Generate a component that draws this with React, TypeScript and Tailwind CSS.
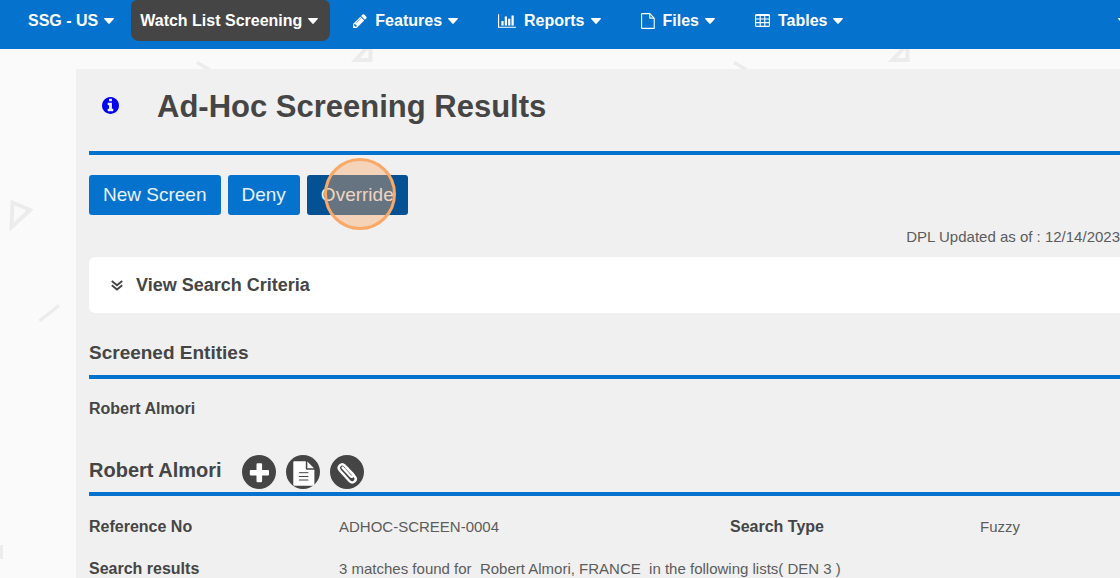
import type { ReactNode } from "react";

const bold = "font-['Liberation_Sans',Arial,sans-serif] font-bold";
const regular = "font-['Liberation_Sans',Arial,sans-serif] font-normal";

function Caret() {
  return (
    <svg viewBox="0 0 10 6" className="h-[6px] w-[10px] shrink-0" fill="currentColor" aria-hidden="true">
      <path d="M.7 0h8.6c.6 0 .9.7.5 1.1L5.7 5.6c-.4.5-1 .5-1.4 0L.2 1.1C-.2.7.1 0 .7 0Z" />
    </svg>
  );
}

function PencilIcon() {
  return (
    <svg viewBox="160 128 1500 1536" className="h-[14px] w-[14px]" fill="currentColor" aria-hidden="true">
      <path d="M491 1536l91-91-235-235-91 91v107h128v128h107zm523-928q0-22-22-22-10 0-17 7l-542 542q-7 7-7 17 0 22 22 22 10 0 17-7l542-542q7-7 7-17zm-54-192l416 416-832 832h-416v-416zm683 96q0 53-37 90l-166 166-416-416 166-165q36-38 90-38 53 0 91 38l235 234q37 39 37 91z" />
    </svg>
  );
}

function ChartIcon() {
  return (
    <svg viewBox="0 128 2048 1536" className="h-[14px] w-[18px]" fill="currentColor" aria-hidden="true">
      <path d="M640 896v512h-256v-512h256zm384-512v1024h-256v-1024h256zm1024 1152v128h-2048v-1536h128v1408h1920zm-640-896v768h-256v-768h256zm384-384v1152h-256v-1152h256z" />
    </svg>
  );
}

function FileIcon() {
  return (
    <svg viewBox="0 0 14 16" className="h-[16px] w-[14px]" fill="none" stroke="currentColor" strokeWidth="1.1" strokeLinejoin="round" aria-hidden="true">
      <path d="M1 .6h7.8l4.4 4.5v10.3H1a.4.4 0 0 1-.4-.4V1A.4.4 0 0 1 1 .6Z" />
      <path d="M8.8.8v4.3h4.2" />
    </svg>
  );
}

function TableIcon() {
  return (
    <svg viewBox="0 0 15 13" className="h-[13px] w-[15px]" fill="none" stroke="currentColor" strokeWidth="1.1" aria-hidden="true">
      <rect x=".6" y=".6" width="13.8" height="11.8" rx="1" />
      <path d="M.6 1.2h13.8" strokeWidth="1.6" />
      <path d="M.6 5h13.8M.6 8.6h13.8M5.2 1v11.4M9.8 1v11.4" />
    </svg>
  );
}

function InfoIcon() {
  return (
    <svg viewBox="128 128 1536 1536" className="h-[17px] w-[17px]" fill="currentColor" aria-hidden="true">
      <path d="M1152 1376v-160q0-14-9-23t-23-9h-96v-512q0-14-9-23t-23-9h-320q-14 0-23 9t-9 23v160q0 14 9 23t23 9h96v320h-96q-14 0-23 9t-9 23v160q0 14 9 23t23 9h448q14 0 23-9t9-23zm-128-896v-160q0-14-9-23t-23-9h-192q-14 0-23 9t-9 23v160q0 14 9 23t23 9h192q14 0 23-9t9-23zm640 416q0 209-103 385.5t-279.5 279.5-385.5 103-385.5-103-279.5-279.5-103-385.5 103-385.5 279.5-279.5 385.5-103 385.5 103 279.5 279.5 103 385.5z" />
    </svg>
  );
}

function DoubleDown() {
  return (
    <svg viewBox="0 0 12 11" className="h-[11px] w-[12px]" fill="none" stroke="currentColor" strokeWidth="1.9" aria-hidden="true">
      <path d="m.8.9 5.2 4.3L11.2.9M.8 5.3 6 9.6l5.2-4.3" />
    </svg>
  );
}

function PlusGlyph() {
  return (
    <svg viewBox="0 0 34 34" className="size-full" aria-hidden="true">
      <path d="M15.500 8.200h3.600a1 1 0 0 1 1 1v5.800h5.900a1 1 0 0 1 1 1v3.400a1 1 0 0 1-1 1h-5.900v5.800a1 1 0 0 1-1 1h-3.600a1 1 0 0 1-1-1v-5.800H8.800a1 1 0 0 1-1-1V16a1 1 0 0 1 1-1h5.700V9.200a1 1 0 0 1 1-1Z" fill="#fff" />
    </svg>
  );
}

function DocumentGlyph() {
  return (
    <svg viewBox="0 0 34 34" className="size-full" aria-hidden="true">
      <path d="M8.300 6.200h11.500v7.600a1 1 0 0 0 1 1H28.400v15a1 1 0 0 1-1 1H8.300a1 1 0 0 1-1-1V7.200a1 1 0 0 1 1-1Z" fill="#fff" />
      <path d="M21.300 6.600 28 13.300h-6.700Z" fill="#fff" />
      <path d="M12.900 17.700h9.500M12.900 21.500h9.500M12.900 25h9.500" stroke="#454545" strokeWidth="1" />
    </svg>
  );
}

function PaperclipGlyph() {
  return (
    <svg viewBox="0 0 34 34" className="size-full" fill="none" stroke="#fff" strokeWidth="2.400" strokeLinecap="round" aria-hidden="true">
      <path d="M18.200 14.200 14.600 10.400C11.500 7.300 6.600 12 9.800 15.400L19.400 26C23 29.800 28 25 24.600 21.300L16.300 12.300" />
      <path d="M12.600 12.600 20.300 21C22 22.800 24.400 20.600 22.800 18.800L16.300 12.300" />
    </svg>
  );
}

function NavItem({ icon, label, className }: { icon: ReactNode; label: string; className: string }) {
  return (
    <button type="button" className={`flex h-[41px] items-center gap-[6px] ${className}`}>
      {icon}
      <span className="ml-[2px]">{label}</span>
      <Caret />
    </button>
  );
}

function BackgroundShapes() {
  return (
    <svg className="absolute inset-0 size-full" fill="none" stroke="#ececec" strokeWidth="3.500" aria-hidden="true">
      <path d="M12.500 202.500 30 210 11.500 227Z" strokeWidth="4" />
      <path d="M39.500 321 59 305.500M197 62.500 210 70M734 62.500 747 70" />
      <path d="M355.500 60h15V44ZM892.500 60h15V44Z" strokeWidth="4" />
      <path d="M0 552h3" strokeWidth="14" />
    </svg>
  );
}

function ToolButton({ label, children }: { label: string; children: ReactNode }) {
  return (
    <button type="button" aria-label={label} className="size-[34px] rounded-full bg-[#454545]">
      {children}
    </button>
  );
}

export default function App() {
  return (
    <div className="relative flex h-screen flex-col overflow-hidden bg-[#fafafa] text-[#454545]">
      <BackgroundShapes />
      <nav className={`relative flex h-[49px] shrink-0 items-start bg-[#0572ce] pl-7 text-base text-white ${bold}`}>
        <button type="button" className="flex h-[41px] items-center gap-[6px]">
          <span>SSG - US</span>
          <Caret />
        </button>
        <button type="button" className="ml-[17px] flex h-[41px] items-center gap-[6px] rounded-b-lg rounded-t-md bg-[#454545] pl-[9px] pr-3">
          <span>Watch List Screening</span>
          <Caret />
        </button>
        <NavItem icon={<PencilIcon />} label="Features" className="ml-[23px]" />
        <NavItem icon={<ChartIcon />} label="Reports" className="ml-10" />
        <NavItem icon={<FileIcon />} label="Files" className="ml-10" />
        <NavItem icon={<TableIcon />} label="Tables" className="ml-10" />
        <button type="button" aria-label="More" className="ml-auto flex h-[41px] w-[2px] items-center overflow-hidden">
          <Caret />
        </button>
      </nav>

      <main className="relative ml-[76px] mt-5 grow bg-[#f0f0f0] pl-[13px]">
        <header className="flex h-[86px] items-start border-b-4 border-[#0572ce] pl-[13px] pt-[19px]">
          <button type="button" aria-label="Information" className="mt-[9px] text-[#0000f0]">
            <InfoIcon />
          </button>
          <h1 className={`ml-[38px] text-[31px] leading-[38px] ${bold}`}>Ad-Hoc Screening Results</h1>
        </header>

        <div className={`mt-5 flex gap-[7px] text-[19px] text-[#e9f2fa] ${regular}`}>
          <button type="button" className="h-10 rounded-[3px] bg-[#0572ce] px-[14px]">New Screen</button>
          <button type="button" className="h-10 rounded-[3px] bg-[#0572ce] px-[14px]">Deny</button>
          <button type="button" className="relative h-10 rounded-[3px] bg-[#045293] px-[14px]">
            Override
            <span className="absolute -top-[17px] left-[17px] size-[72px] rounded-full border-[3px] border-[#f9a866] bg-[#f9a866]/40" />
          </button>
        </div>

        <p className={`mt-[10px] text-right text-[15px] leading-6 text-[#5c5c5c] ${regular}`}>DPL Updated as of : 12/14/2023</p>

        <button type="button" className={`mt-2 flex h-14 w-full items-center gap-[13px] rounded-l-md bg-white pl-[22px] text-[18px] ${bold}`}>
          <DoubleDown />
          <span>View Search Criteria</span>
        </button>

        <h2 className={`mt-7 border-b-4 border-[#0572ce] pb-[10px] text-[19px] leading-6 ${bold}`}>Screened Entities</h2>
        <p className={`mt-[18px] text-base leading-6 ${bold}`}>Robert Almori</p>

        <div className="mt-[34px] flex items-start gap-[10px] border-b-4 border-[#0572ce] pb-[3px]">
          <h2 className={`mr-[10px] text-[20px] leading-[30px] ${bold}`}>Robert Almori</h2>
          <ToolButton label="Add"><PlusGlyph /></ToolButton>
          <ToolButton label="Notes"><DocumentGlyph /></ToolButton>
          <ToolButton label="Attachments"><PaperclipGlyph /></ToolButton>
        </div>

        <dl className={`mt-[19px] grid grid-cols-[250px_391px_250px_1fr] gap-y-[18px] text-[15px] leading-6 text-[#5c5c5c] ${regular}`}>
          <dt className={`text-base text-[#454545] ${bold}`}>Reference No</dt>
          <dd>ADHOC-SCREEN-0004</dd>
          <dt className={`text-base text-[#454545] ${bold}`}>Search Type</dt>
          <dd>Fuzzy</dd>
          <dt className={`text-base text-[#454545] ${bold}`}>Search results</dt>
          <dd className="col-span-3 whitespace-pre">3 matches found for  Robert Almori, FRANCE  in the following lists( DEN 3 )</dd>
        </dl>
      </main>
    </div>
  );
}
